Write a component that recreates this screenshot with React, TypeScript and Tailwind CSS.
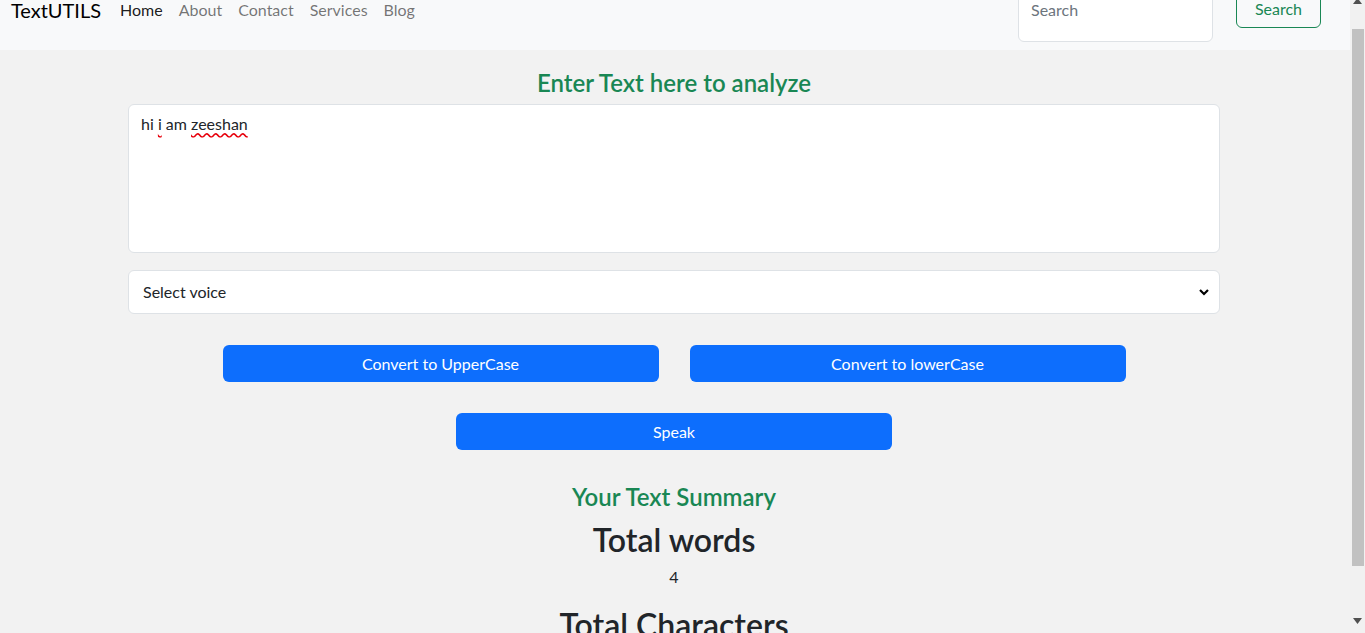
// TextUtils page, scrolled a little so the navbar top is cut off
const navLinks = ["Home", "About", "Contact", "Services", "Blog"];

const font = { fontFamily: "Lato, 'Open Sans', sans-serif" };

function Navbar() {
  return (
    <div className="h-[50px] shrink-0 bg-[#f8f9fa] overflow-hidden flex items-start">
      <div className="ml-[11px] mt-[-5px] text-[20px] leading-[30px] text-black">TextUTILS</div>
      <div className="flex items-start gap-[16px] ml-[19px] mt-[-2px] text-[16px] leading-[24px]">
        {navLinks.map((l, i) => (
          <span key={l} className={i === 0 ? "text-black/90" : "text-black/55"}>
            {l}
          </span>
        ))}
      </div>
      <div className="ml-auto mr-[29px] flex items-start gap-[23px]">
        <div className="mt-[-22px] w-[195px] h-[64px] bg-white border border-[#dee2e6] rounded-md flex items-center pl-[12px] text-[16px] text-[#6c757d]">
          Search
        </div>
        <button className="mt-[-10px] w-[85px] h-[38px] border border-[#198754] text-[#198754] rounded-md text-[16px]">
          Search
        </button>
      </div>
    </div>
  );
}

function Scrollbar() {
  return (
    <div className="w-[15px] bg-[#f1f1f1] flex flex-col items-center shrink-0">
      <svg width="9" height="6" viewBox="0 0 9 6" className="mt-[-2px] shrink-0">
        <path d="M0 6 L4.5 0 L9 6 Z" fill="#505050" />
      </svg>
      <div className="mt-[25px] w-[12px] h-[537px] shrink-0 bg-[#c1c1c1]" />
      <svg width="9" height="6" viewBox="0 0 9 6" className="mt-[52px] shrink-0">
        <path d="M0 0 L4.5 6 L9 0 Z" fill="#505050" />
      </svg>
    </div>
  );
}

export default function App() {
  const text = "hi i am zeeshan";
  const words = text.split(/\s+/).filter((w) => w.length > 0).length;

  return (
    <div className="h-[633px] overflow-hidden flex bg-[#f2f2f2] text-[#212529]" style={font}>
      <div className="flex-1 flex flex-col">
        <Navbar />
        <div className="w-[1092px] ml-[128px] shrink-0 flex flex-col">
          <h2 className="mt-[18px] text-center text-[24px] leading-[29px] font-semibold text-[#198754]">
            Enter Text here to analyze
          </h2>
          <div className="mt-[7px] h-[149px] bg-white border border-[#dee2e6] rounded-md px-[12px] py-[7px] text-[16px] leading-[24px]">
            hi <span className="underline decoration-wavy decoration-red-600 underline-offset-2">i</span> am{" "}
            <span className="underline decoration-wavy decoration-red-600 underline-offset-2">zeeshan</span>
          </div>
          <div className="mt-[17px] h-[44px] bg-white border border-[#dee2e6] rounded-md pl-[14px] pr-[10px] flex items-center justify-between text-[16px]">
            <span className="text-[#212529]">Select voice</span>
            <svg width="10" height="8" viewBox="0 0 10 8">
              <path d="M1 2 L5 6 L9 2" stroke="#000" strokeWidth="2.2" fill="none" />
            </svg>
          </div>
          <div className="mt-[31px] flex justify-center gap-[31px]">
            <button className="w-[436px] h-[37px] rounded-md bg-[#0d6efd] text-white text-[16px]">
              Convert to UpperCase
            </button>
            <button className="w-[436px] h-[37px] rounded-md bg-[#0d6efd] text-white text-[16px]">
              Convert to lowerCase
            </button>
          </div>
          <div className="mt-[31px] flex justify-center">
            <button className="w-[436px] h-[37px] rounded-md bg-[#0d6efd] text-white text-[16px]">Speak</button>
          </div>
          <h3 className="mt-[32px] text-center text-[24px] leading-[29px] font-semibold text-[#198754]">
            Your Text Summary
          </h3>
          <h2 className="mt-[10px] text-center text-[32px] leading-[38px] font-semibold">Total words</h2>
          <p className="mt-[6px] text-center text-[16px] leading-[24px]">{words}</p>
          <h2 className="mt-[17px] text-center text-[32px] leading-[38px] font-semibold">Total Characters</h2>
          <p className="mt-[6px] text-center text-[16px] leading-[24px]">{text.length}</p>
        </div>
      </div>
      <Scrollbar />
    </div>
  );
}
